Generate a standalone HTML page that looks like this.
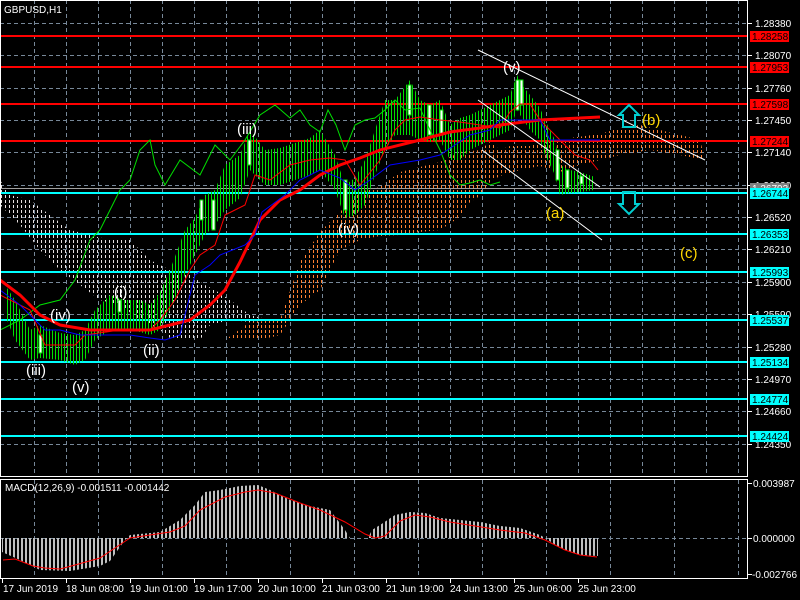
<!DOCTYPE html>
<html><head><meta charset="utf-8"><style>
html,body{margin:0;padding:0;background:#000;width:800px;height:600px;overflow:hidden}
svg{display:block}
text{font-family:"Liberation Sans",sans-serif;font-size:10px}
</style></head><body>
<svg width="800" height="600" viewBox="0 0 800 600" xmlns="http://www.w3.org/2000/svg">
<defs>
<pattern id="pw" width="4" height="5" patternUnits="userSpaceOnUse"><rect x="1" y="0" width="1" height="3" fill="#e8e0e0"/></pattern>
<pattern id="po" width="4" height="5" patternUnits="userSpaceOnUse"><rect x="1" y="0" width="1" height="3" fill="#ff8030"/></pattern>
<pattern id="pg" width="3" height="600" patternUnits="userSpaceOnUse"><rect x="1" y="0" width="1" height="600" fill="#00e000"/></pattern>
<pattern id="ph" width="4" height="600" patternUnits="userSpaceOnUse"><rect x="1" y="0" width="2" height="600" fill="#c0c0c0"/></pattern>
</defs>
<rect width="800" height="600" fill="#000"/>
<g stroke="#778899" stroke-width="1" stroke-dasharray="4,3">
<path d="M34.5 0V476M66.5 0V476M98.5 0V476M130.5 0V476M162.5 0V476M194.5 0V476M226.5 0V476M258.5 0V476M290.5 0V476M322.5 0V476M354.5 0V476M386.5 0V476M418.5 0V476M450.5 0V476M482.5 0V476M514.5 0V476M546.5 0V476M578.5 0V476M610.5 0V476M642.5 0V476M674.5 0V476M706.5 0V476M738.5 0V476"/>
<path d="M34.5 480V578M98.5 480V578M162.5 480V578M226.5 480V578M290.5 480V578M354.5 480V578M418.5 480V578M482.5 480V578M546.5 480V578M610.5 480V578M674.5 480V578M738.5 480V578"/>
<path d="M0 23.5H747M0 55.5H747M0 88.5H747M0 120.5H747M0 152.5H747M0 185.5H747M0 217.5H747M0 249.5H747M0 282.5H747M0 314.5H747M0 347.5H747M0 379.5H747M0 411.5H747M0 444.5H747M0 538.5H747"/>
</g>
<polygon fill="url(#pw)" points="0,180 10,195 30,200 50,215 70,230 90,235 110,240 130,240 150,260 170,270 190,275 205,285 215,290 230,300 250,315 270,320 250,322 230,320 210,325 200,340 190,340 170,338 160,330 140,320 120,305 100,300 80,285 60,270 40,250 20,225 0,205"/>
<polygon fill="url(#po)" points="280,320 300,262 320,232 340,212 360,192 380,187 400,172 420,167 440,162 460,152 480,150 490,142 500,150 510,146 530,146 550,140 570,138 600,134 620,128 640,125 660,130 680,135 700,140 705,160 680,155 650,150 620,155 600,160 580,165 560,172 540,166 520,170 500,176 490,182 480,196 470,202 460,217 440,230 420,232 400,235 380,236 360,240 340,250 320,290 300,305 280,335 260,340 225,340 250,322"/>
<g stroke-width="2">
<path stroke="#ff0000" d="M0 36H747M0 67H747M0 104H747M0 141H747"/>
<path stroke="#00ffff" d="M0 193H747M0 234H747M0 272H747M0 320H747M0 362H747M0 399H747M0 436H747"/>
</g>
<path stroke="#a0a0a0" stroke-width="1" d="M0 188.5H747"/>
<polygon fill="url(#pg)" points="5,285 15,300 30,330 40,325 60,333 75,335 85,330 95,310 110,295 125,300 140,300 150,305 160,292 170,270 185,230 195,218 205,195 215,190 225,165 240,155 250,130 265,150 280,148 295,143 310,138 320,130 335,155 345,185 355,178 365,160 375,130 385,100 395,100 410,80 420,100 430,105 440,100 450,125 460,118 470,115 480,110 490,105 500,100 510,95 517,75 522,85 530,95 540,108 545,120 555,140 560,165 570,170 580,172 595,177 595,190 580,192 570,193 560,195 555,175 545,155 540,140 530,130 522,118 517,110 510,130 500,135 490,140 480,145 470,150 460,160 450,160 440,140 430,142 420,140 410,135 395,135 385,150 375,175 365,205 355,215 345,218 335,190 320,170 310,175 295,180 280,185 265,185 250,170 240,198 225,210 215,225 205,235 195,255 185,275 170,310 160,330 150,335 140,332 125,330 110,330 95,340 85,360 75,365 60,360 40,358 30,360 15,340 5,315"/>
<g fill="#fff" stroke="#00e000" stroke-width="1">
<rect x="39" y="335" width="3" height="18"/><rect x="118" y="300" width="3" height="12"/><rect x="200" y="200" width="3" height="20"/><rect x="212" y="200" width="3" height="30"/><rect x="248" y="140" width="3" height="25"/><rect x="344" y="180" width="3" height="30"/><rect x="408" y="85" width="3" height="30"/><rect x="428" y="105" width="3" height="30"/><rect x="440" y="110" width="3" height="25"/><rect x="516" y="80" width="3" height="30"/><rect x="520" y="80" width="3" height="25"/><rect x="556" y="150" width="3" height="30"/><rect x="566" y="170" width="3" height="18"/><rect x="580" y="176" width="3" height="8"/>
</g>
<polyline fill="none" stroke="#00e000" stroke-width="1" points="0,330 20,320 40,305 60,300 75,280 90,240 100,230 110,210 120,190 130,180 140,150 150,140 155,165 165,185 180,160 200,175 215,145 230,160 245,140 260,115 275,105 290,118 300,110 310,125 320,132 328,110 336,125 345,150 355,125 365,120 375,118 385,110 395,100 405,110 420,108 430,130 440,150 450,175 460,185 470,183 480,180 490,185 500,182"/>
<polyline fill="none" stroke="#ff0000" stroke-width="3" points="0,280 20,295 40,315 60,325 90,330 120,330 150,330 170,325 190,320 210,305 225,290 240,262 260,220 280,200 300,190 320,175 340,165 360,158 380,150 420,140 450,132 480,128 500,125 540,120 600,117"/>
<polyline fill="none" stroke="#ff0000" stroke-width="1" points="0,295 30,310 45,345 75,345 85,335 120,330 150,330 160,320 175,300 190,270 200,255 215,245 225,215 235,210 245,205 255,175 270,180 290,165 310,160 330,158 345,160 360,185 380,160 395,130 405,120 420,117 440,120 460,122 480,125 500,128 510,112 520,104 530,104 540,120 560,140 575,155 590,160 598,170"/>
<polyline fill="none" stroke="#0000ff" stroke-width="1" points="0,290 20,305 30,315 45,330 60,330 80,335 100,335 130,335 150,338 165,340 180,335 195,275 210,265 220,255 245,245 255,235 262,212 285,195 300,180 320,170 340,178 355,190 370,180 390,165 420,160 440,155 455,145 470,135 490,130 500,120 540,120 550,140 600,140"/>
<g stroke="#ffffff" stroke-width="1">
<line x1="478" y1="50" x2="705" y2="160"/>
<line x1="478" y1="100" x2="600" y2="187"/>
<line x1="482" y1="150" x2="602" y2="240"/>
</g>
<path d="M623 127V115H619L629 105L639 115H635V127Z" fill="none" stroke="#00ced1" stroke-width="2"/>
<path d="M623 192V204H619L629 214L639 204H635V192Z" fill="none" stroke="#00ced1" stroke-width="2"/>
<g fill="#fff">
<text x="503" y="72" style="font-size:15px">(v)</text>
<text x="237" y="134" style="font-size:15px">(iii)</text>
<text x="338" y="234" style="font-size:15px">(iv)</text>
<text x="114" y="297" style="font-size:15px">(i)</text>
<text x="143" y="355" style="font-size:15px">(ii)</text>
<text x="50" y="320" style="font-size:15px">(iv)</text>
<text x="26" y="375" style="font-size:15px">(iii)</text>
<text x="72" y="392" style="font-size:15px">(v)</text>
</g>
<g fill="#ffd700">
<text x="546" y="218" style="font-size:15px">(a)</text>
<text x="642" y="125" style="font-size:15px">(b)</text>
<text x="680" y="258" style="font-size:15px">(c)</text>
</g>
<text x="4" y="13" fill="#fff">GBPUSD,H1</text>
<polygon fill="url(#ph)" points="2,538 2,552 20,560 40,570 70,571 100,566 110,561 125,540 130,535 160,532 180,520 195,505 205,492 220,490 240,486 258,485 270,490 290,500 310,506 330,510 345,530 350,538 368,538 372,530 380,525 395,515 410,512 425,513 440,518 460,520 480,522 500,526 520,528 540,535 545,538 560,548 580,555 598,556 598,538"/>
<polyline fill="none" stroke="#ff0000" stroke-width="1" points="3,560 15,559 33,566 45,568 60,569 75,565 100,558 130,538 150,535 170,532 185,526 200,510 225,497 245,492 258,490 275,493 300,503 320,510 345,522 365,534 375,538 385,536 400,521 415,515 430,517 450,522 475,526 500,530 525,533 545,540 565,550 580,555 597,557"/>
<text x="5" y="491" fill="#fff">MACD(12,26,9) -0.001511 -0.001442</text>
<g fill="none" stroke="#fff" stroke-width="1">
<rect x="0.5" y="0.5" width="747" height="476"/>
<rect x="0.5" y="479.5" width="747" height="99"/>
</g>
<g stroke="#fff"><path d="M748 23.5h4M748 55.5h4M748 88.5h4M748 120.5h4M748 152.5h4M748 185.5h4M748 217.5h4M748 249.5h4M748 282.5h4M748 314.5h4M748 347.5h4M748 379.5h4M748 411.5h4M748 444.5h4M748 483.5h4M748 538.5h4M748 574.5h4"/>
<path d="M2.5 579v4M66.5 579v4M130.5 579v4M194.5 579v4M258.5 579v4M322.5 579v4M386.5 579v4M450.5 579v4M514.5 579v4M578.5 579v4"/></g>
<g fill="#fff">
<text x="755" y="27">1.28380</text><text x="755" y="59">1.28070</text><text x="755" y="92">1.27760</text><text x="755" y="124">1.27450</text><text x="755" y="156">1.27140</text><text x="755" y="189">1.26830</text><text x="755" y="221">1.26520</text><text x="755" y="253">1.26210</text><text x="755" y="286">1.25900</text><text x="755" y="318">1.25590</text><text x="755" y="351">1.25280</text><text x="755" y="383">1.24970</text><text x="755" y="415">1.24660</text><text x="755" y="448">1.24350</text>
<text x="753" y="487">0.003987</text><text x="753" y="542">0.000000</text><text x="752" y="578">-0.002766</text>
</g>
<rect x="750" y="183" width="39" height="11" fill="#808080"/><text x="752" y="192" fill="#fff">1.26793</text>
<g fill="#ff0000"><rect x="750" y="31" width="39" height="11"/><rect x="750" y="62" width="39" height="11"/><rect x="750" y="99" width="39" height="11"/><rect x="750" y="136" width="39" height="11"/></g>
<g fill="#00ffff"><rect x="750" y="188" width="39" height="11"/><rect x="750" y="229" width="39" height="11"/><rect x="750" y="267" width="39" height="11"/><rect x="750" y="315" width="39" height="11"/><rect x="750" y="357" width="39" height="11"/><rect x="750" y="394" width="39" height="11"/><rect x="750" y="431" width="39" height="11"/></g>
<g fill="#000">
<text x="752" y="40">1.28258</text><text x="752" y="71">1.27953</text><text x="752" y="108">1.27598</text><text x="752" y="145">1.27244</text>
<text x="752" y="197">1.26744</text><text x="752" y="238">1.26353</text><text x="752" y="276">1.25993</text><text x="752" y="324">1.25537</text><text x="752" y="366">1.25134</text><text x="752" y="403">1.24774</text><text x="752" y="440">1.24424</text>
</g>
<g fill="#fff">
<text x="3" y="592">17 Jun 2019</text><text x="66" y="592">18 Jun 08:00</text><text x="130" y="592">19 Jun 01:00</text><text x="194" y="592">19 Jun 17:00</text><text x="258" y="592">20 Jun 10:00</text><text x="322" y="592">21 Jun 03:00</text><text x="386" y="592">21 Jun 19:00</text><text x="450" y="592">24 Jun 13:00</text><text x="514" y="592">25 Jun 06:00</text><text x="578" y="592">25 Jun 23:00</text>
</g>
</svg>
</body></html>
